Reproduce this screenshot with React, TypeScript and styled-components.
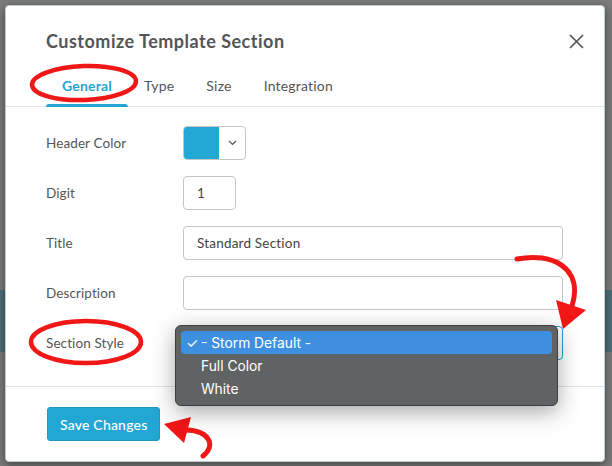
import React from 'react';
import styled, {createGlobalStyle} from 'styled-components';

const GlobalStyle = createGlobalStyle`
  html, body {
    margin: 0;
    padding: 0;
  }
  body {
    font-family: Lato, "Open Sans", sans-serif;
    color: #555;
  }
`;

const Backdrop = styled.div`
  position: relative;
  width: 612px;
  height: 466px;
  box-sizing: border-box;
  padding: 5px 7px 4px 5px;
  background: linear-gradient(
    to bottom,
    #7b7b7b 0 290px,
    #4e6f78 290px 352px,
    #7b7b7b 352px
  );
  overflow: hidden;
`;

const Modal = styled.div`
  width: 600px;
  height: 457px;
  box-sizing: border-box;
  display: flex;
  flex-direction: column;
  background: #fff;
  border: 1px solid #bfcdd2;
  border-radius: 4px;
  box-shadow: 0 3px 10px rgba(0, 0, 0, 0.45);
`;

const Header = styled.div`
  display: flex;
  justify-content: space-between;
  align-items: center;
  padding: 23px 16px 0 40px;
`;

const Title = styled.h2`
  margin: 0;
  font-size: 18px;
  line-height: 24px;
  font-weight: 700;
  letter-spacing: 0.5px;
  color: #555;
`;

const Close = styled.button`
  width: 24px;
  height: 24px;
  padding: 0;
  border: none;
  background: none;
  display: flex;
  align-items: center;
  justify-content: center;
`;

const TabList = styled.div`
  display: flex;
  margin-top: 15px;
  padding-left: 40px;
  border-bottom: 1px solid #e4e4e4;
`;

const Tab = styled.div<{active?: boolean}>`
  position: relative;
  padding: 8px 16px 11px;
  margin-bottom: -1px;
  font-size: 14px;
  line-height: 20px;
  letter-spacing: 0.2px;
  font-weight: ${p => (p.active ? 700 : 400)};
  color: ${p => (p.active ? '#22a6d4' : '#555')};
  &::after {
    content: '';
    display: ${p => (p.active ? 'block' : 'none')};
    position: absolute;
    left: 0;
    right: 0;
    bottom: 0;
    height: 3px;
    border-radius: 3px 3px 0 0;
    background: #22a6d4;
  }
`;

const Form = styled.div`
  flex: 1;
  display: flex;
  flex-direction: column;
  gap: 16px;
  padding: 19px 41px 0 40px;
`;

const Row = styled.div`
  display: grid;
  grid-template-columns: 137px 1fr;
  align-items: center;
  height: 34px;
`;

const Label = styled.label`
  font-size: 13.5px;
  letter-spacing: 0.1px;
  color: #555;
`;

const Input = styled.div<{w?: number; focus?: boolean}>`
  position: relative;
  box-sizing: border-box;
  width: ${p => (p.w ? `${p.w}px` : '100%')};
  height: 34px;
  padding: 0 13px;
  display: flex;
  align-items: center;
  border: 1px solid ${p => (p.focus ? '#22a0d0' : '#c6c6c6')};
  border-radius: 4px;
  font-size: 13.5px;
  letter-spacing: 0.2px;
  color: #444;
`;

const ColorPicker = styled.div`
  box-sizing: border-box;
  width: 63px;
  height: 34px;
  display: flex;
  border: 1px solid #c6c6c6;
  border-radius: 4px;
  overflow: hidden;
`;

const Swatch = styled.div<{color: string}>`
  width: 35px;
  background: ${p => p.color};
`;

const Caret = styled.div`
  flex: 1;
  display: flex;
  align-items: center;
  justify-content: center;
`;

const Menu = styled.div`
  position: absolute;
  left: -9px;
  top: -2px;
  width: 383px;
  box-sizing: border-box;
  padding: 5px 5px;
  background: #5f6364;
  border: 1px solid #3c3e3f;
  border-radius: 6px;
  box-shadow: 0 6px 22px rgba(0, 0, 0, 0.35);
  font-family: Inter, "Liberation Sans", sans-serif;
  font-size: 13.8px;
  letter-spacing: 0;
  color: #fff;
  z-index: 2;
`;

const Option = styled.div<{selected?: boolean}>`
  display: flex;
  align-items: center;
  height: 23px;
  padding-left: 5px;
  border-radius: 4px;
  background: ${p => (p.selected ? '#3e8fe0' : 'transparent')};
`;

const Check = styled.span`
  width: 15px;
  font-size: 14px;
`;

const Footer = styled.div`
  display: flex;
  padding: 20px 41px 20px;
  border-top: 1px solid #dfe3e6;
`;

const Button = styled.button`
  height: 34px;
  padding: 0 12px;
  border: 1px solid #1f98c4;
  border-radius: 3px;
  background: #22a6d4;
  color: #fff;
  font-family: Lato, "Open Sans", sans-serif;
  font-size: 14px;
  letter-spacing: 0.2px;
  font-weight: 500;
`;

const Annotations = styled.svg`
  position: absolute;
  left: 0;
  top: 0;
  width: 612px;
  height: 466px;
  pointer-events: none;
`;

const options = ['- Storm Default -', 'Full Color', 'White'];

export default function App() {
  return (
    <>
      <GlobalStyle />
      <Backdrop>
        <Modal>
          <Header>
            <Title>Customize Template Section</Title>
            <Close>
              <svg width="15" height="15" viewBox="0 0 15 15">
                <path d="M1 1 L14 14 M14 1 L1 14" stroke="#555" strokeWidth="1.7" />
              </svg>
            </Close>
          </Header>
          <TabList>
            <Tab active>General</Tab>
            <Tab>Type</Tab>
            <Tab>Size</Tab>
            <Tab>Integration</Tab>
          </TabList>
          <Form>
            <Row>
              <Label>Header Color</Label>
              <ColorPicker>
                <Swatch color="#23a7d5" />
                <Caret>
                  <svg width="9" height="6" viewBox="0 0 9 6">
                    <path d="M1 1 L4.5 4.5 L8 1" fill="none" stroke="#555" strokeWidth="1.2" />
                  </svg>
                </Caret>
              </ColorPicker>
            </Row>
            <Row>
              <Label>Digit</Label>
              <Input w={53}>1</Input>
            </Row>
            <Row>
              <Label>Title</Label>
              <Input>Standard Section</Input>
            </Row>
            <Row>
              <Label>Description</Label>
              <Input />
            </Row>
            <Row>
              <Label>Section Style</Label>
              <Input focus>
                <Menu>
                  {options.map((o, i) => (
                    <Option key={o} selected={i === 0}>
                      <Check>{i === 0 ? '✓' : ''}</Check>
                      {o}
                    </Option>
                  ))}
                </Menu>
              </Input>
            </Row>
          </Form>
          <Footer>
            <Button>Save Changes</Button>
          </Footer>
        </Modal>
        <Annotations viewBox="0 0 612 466">
          <g fill="none" stroke="#f21717" strokeWidth="4.5" strokeLinecap="round">
            <ellipse cx="84" cy="83" rx="52" ry="17" transform="rotate(-2 84 83)" />
            <ellipse cx="86" cy="342" rx="55" ry="21" />
            <path d="M517 259 C552 252 584 268 572 306" strokeWidth="5" />
            <path d="M203 456 C216 446 210 431 187 430" strokeWidth="5" />
          </g>
          <g fill="#f21717">
            <polygon points="556,300 586,310 563,329" />
            <polygon points="164,424 191,417 184,443" />
          </g>
        </Annotations>
      </Backdrop>
    </>
  );
}
